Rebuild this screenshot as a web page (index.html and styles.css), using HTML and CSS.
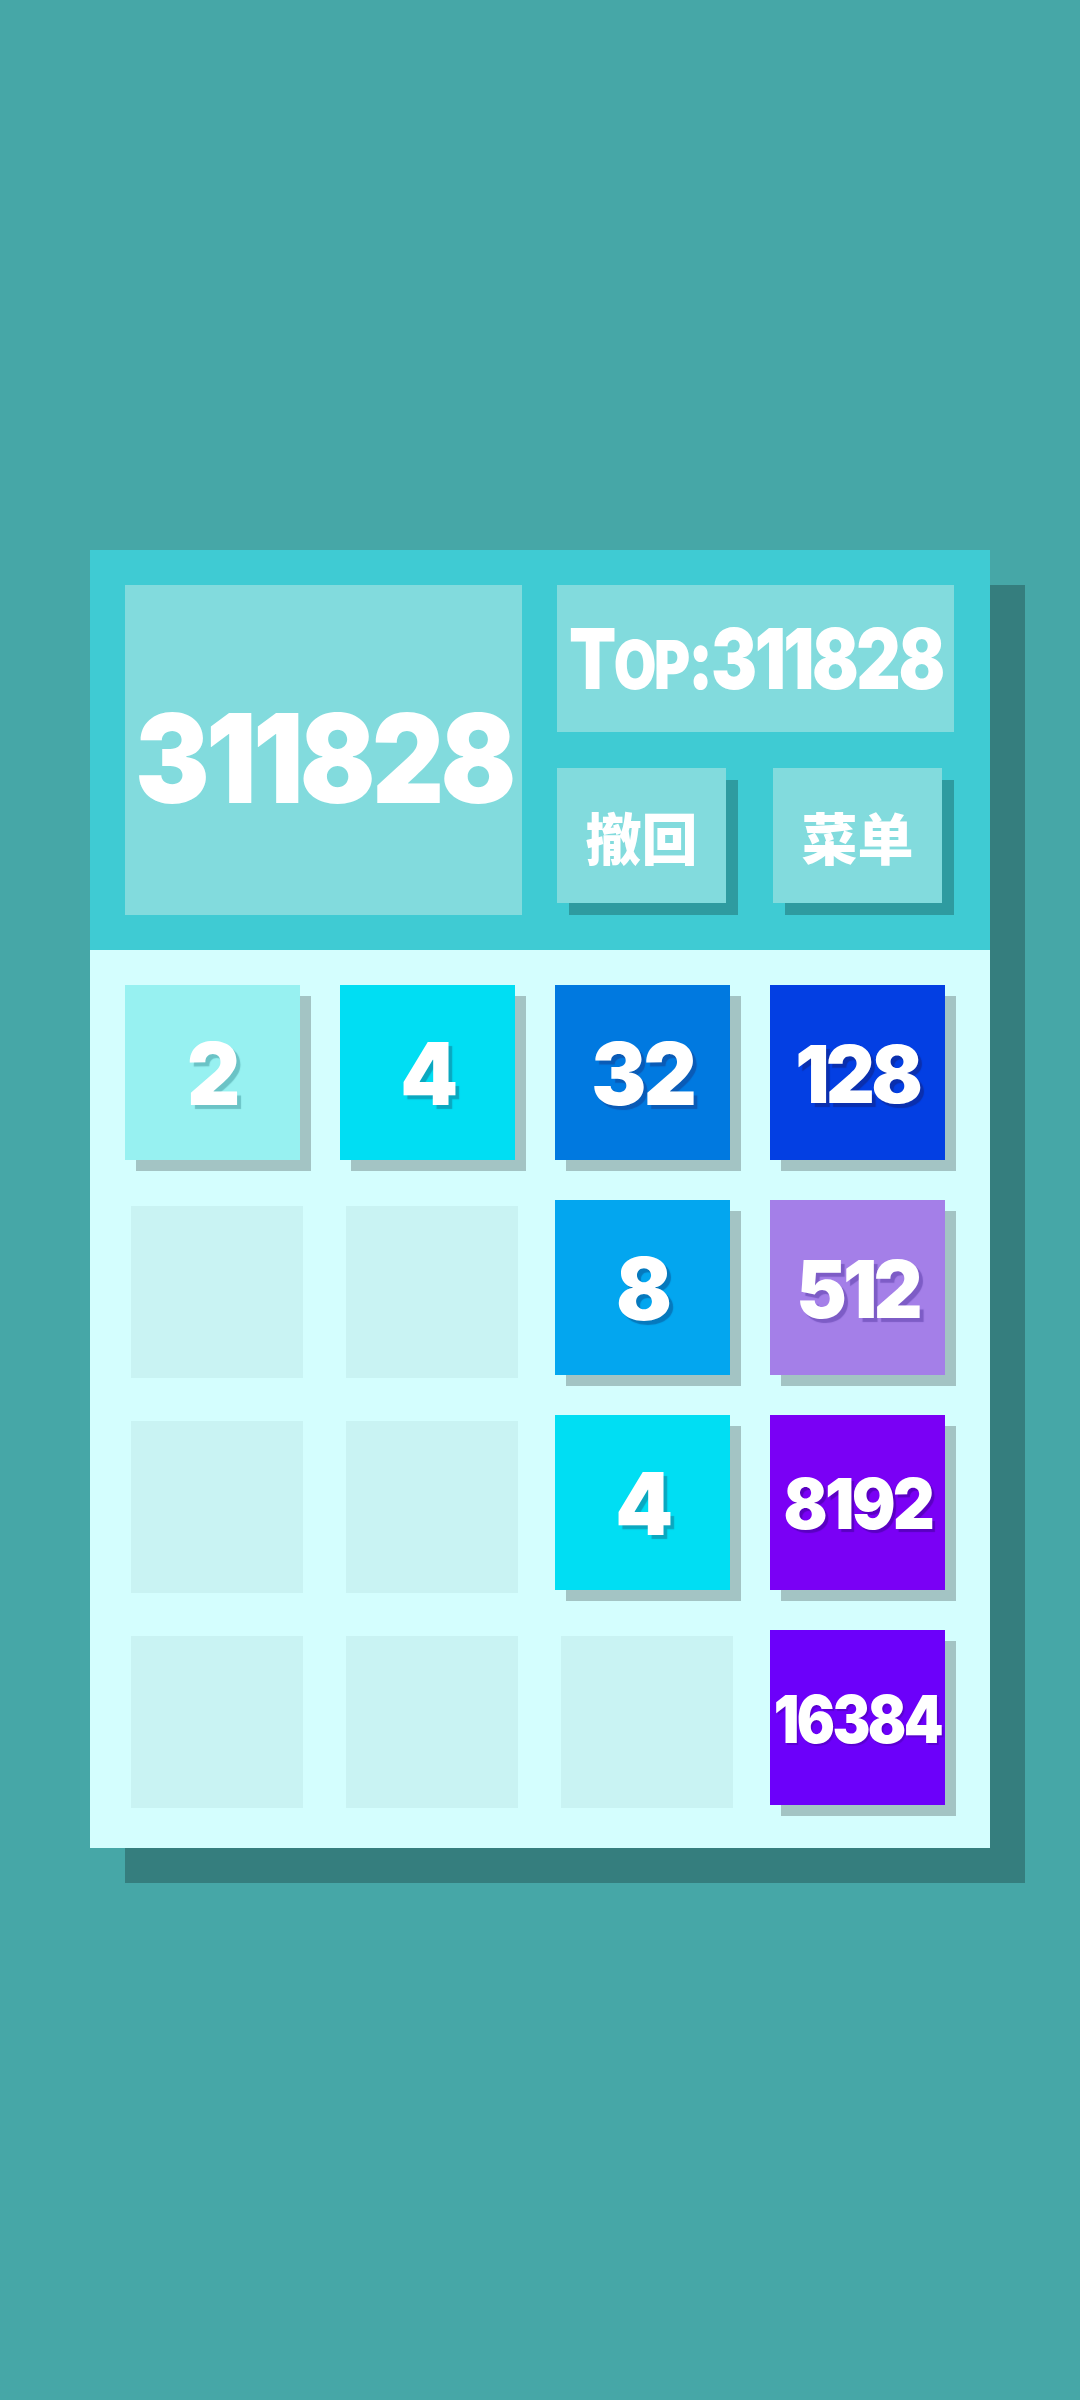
FILE: index.html
```html
<!DOCTYPE html>
<html lang="zh">
<head>
<meta charset="utf-8">
<title>2048</title>
<link rel="stylesheet" href="styles.css">
</head>
<body>
<main class="screen">
  <section class="panel">
    <header class="header">
      <div class="score-box"><span class="score">311828</span></div>
      <div class="side">
        <div class="top-box"><span class="top">T<span class="sc">op</span>:311828</span></div>
        <div class="buttons">
          <div class="btn">撤回</div>
          <div class="btn">菜单</div>
        </div>
      </div>
    </header>
    <div class="board">
      <div class="tile t2"><span>2</span></div>
      <div class="tile t4"><span>4</span></div>
      <div class="tile t32"><span>32</span></div>
      <div class="tile t128 d3"><span>128</span></div>

      <div class="empty"></div>
      <div class="empty"></div>
      <div class="tile t8"><span>8</span></div>
      <div class="tile t512 d3"><span>512</span></div>

      <div class="empty"></div>
      <div class="empty"></div>
      <div class="tile t4"><span>4</span></div>
      <div class="tile t8192 d4"><span>8192</span></div>

      <div class="empty"></div>
      <div class="empty"></div>
      <div class="empty"></div>
      <div class="tile t16384 d5"><span>16384</span></div>
    </div>
  </section>
</main>
</body>
</html>
```

FILE: styles.css
```css
* { box-sizing: border-box; }
html, body {
  margin: 0;
  padding: 0;
}
body {
  width: 1080px;
  height: 2400px;
  background: #46a7a7;
  font-family: "Inter", "Lato", "Noto Sans CJK SC", sans-serif;
  color: #ffffff;
}
.screen {
  width: 1080px;
  height: 2400px;
  display: flex;
  align-items: center;
  justify-content: center;
  padding-bottom: 2px;
}
.panel {
  width: 900px;
  box-shadow: 35px 35px 0 #357e7e;
}
.header {
  height: 400px;
  background: #3fcbd3;
  padding: 35px;
  display: grid;
  grid-template-columns: 397px 397px;
  column-gap: 35px;
}
.score-box {
  background: #82dbdd;
  display: flex;
  align-items: center;
  justify-content: center;
}
.score {
  display: inline-block;
  font-size: 124px;
  font-weight: 900;
  letter-spacing: -4px;
  line-height: 1;
  margin-top: 16px;
  transform: scaleX(0.9);
}
.side {
  display: flex;
  flex-direction: column;
  gap: 36px;
}
.top-box {
  height: 147px;
  background: #82dbdd;
  display: flex;
  align-items: center;
  justify-content: center;
}
.top {
  display: inline-block;
  font-size: 84px;
  font-weight: 900;
  letter-spacing: -3px;
  line-height: 1;
  white-space: nowrap;
  transform: scaleX(0.82);
}
.top .sc {
  text-transform: uppercase;
  font-size: 0.8em;
}
.buttons {
  display: flex;
  justify-content: space-between;
  padding-right: 12px;
}
.btn {
  width: 169px;
  height: 135px;
  background: #82dbdd;
  box-shadow: 12px 12px 0 #2e9ba0;
  display: flex;
  align-items: center;
  justify-content: center;
  font-family: "Noto Sans CJK SC", sans-serif;
  font-weight: 900;
  font-size: 56px;
  line-height: 1;
}
.board {
  height: 898px;
  background: #d4fefe;
  padding: 35px;
  display: grid;
  grid-template-columns: repeat(4, 175px);
  grid-template-rows: repeat(4, 175px);
  gap: 40px;
}
.empty {
  width: 172px;
  height: 172px;
  margin: 6px 0 0 6px;
  background: #c9f3f3;
}
.tile {
  width: 175px;
  height: 175px;
  box-shadow: 11px 11px 0 #a3c4c4;
  display: flex;
  align-items: center;
  justify-content: center;
  font-weight: 900;
  font-size: 86px;
  line-height: 1;
  letter-spacing: -3px;
}
.tile span {
  display: inline-block;
  margin-top: 2px;
  transform: scaleX(0.96);
  white-space: nowrap;
}
.tile.d3 { font-size: 80px; letter-spacing: -4px; }
.tile.d3 span { transform: scaleX(0.95); }
.tile.d4 { font-size: 70px; letter-spacing: -3px; }
.tile.d4 span { transform: scaleX(0.93); }
.tile.d5 { font-size: 66px; letter-spacing: -3px; }
.tile.d5 span { transform: scaleX(0.86); }

.t2 { background: #97f1f1; text-shadow: 4px 4px 1px #6bc3c6; }
.t4 { background: #00def3; text-shadow: 4px 4px 1px #0aa8c0; }
.t8 { background: #03a6ef; text-shadow: 4px 4px 1px #0679bd; }
.t32 { background: #0079e0; text-shadow: 4px 4px 1px #0a5bb6; }
.t128 { background: #033fe3; text-shadow: 4px 4px 1px #0a2fae; }
.t512 { background: #a47fe8; text-shadow: 4px 4px 1px #7d5cc6; }
.t8192 { background: #7a00f5; text-shadow: 3px 3px 1px #5a00c2; }
.t16384 { background: #6c00fa; text-shadow: 2px 2px 1px #5a00d0; }
```
